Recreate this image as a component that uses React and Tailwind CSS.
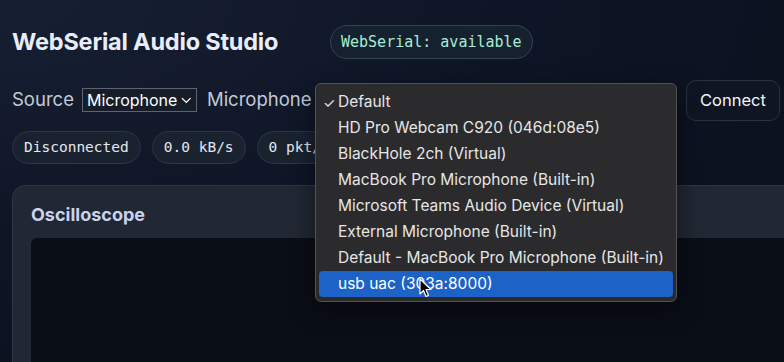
import React from 'react';

const mono = { fontFamily: '"DejaVu Sans Mono", "Liberation Mono", monospace' };

const devices = [
  'Default',
  'HD Pro Webcam C920 (046d:08e5)',
  'BlackHole 2ch (Virtual)',
  'MacBook Pro Microphone (Built-in)',
  'Microsoft Teams Audio Device (Virtual)',
  'External Microphone (Built-in)',
  'Default - MacBook Pro Microphone (Built-in)',
  'usb uac (303a:8000)',
];

const Pill = ({ children }) => (
  <span
    className="h-[33px] px-[11px] flex items-center rounded-full bg-[#1a2230] border border-[#2c3646] text-[14.5px] text-[#e2e8f0]"
    style={mono}
  >
    {children}
  </span>
);

const Cursor = () => (
  <svg className="absolute left-[419px] top-[278px]" width="14" height="20" viewBox="0 0 14 20">
    <path d="M1 1 L1 16 L4.5 12.5 L7 18.5 L9.5 17.5 L7 11.5 L12 11.5 Z" fill="#000" stroke="#fff" strokeWidth="1.2" strokeLinejoin="round" />
  </svg>
);

export default function App() {
  return (
    <div
      className="relative w-[784px] h-[362px] overflow-hidden bg-[radial-gradient(ellipse_at_0%_0%,#172033_0%,#0e1526_45%,#0a0f1a_100%)] pl-[12px] pt-[25px]"
      style={{ fontFamily: 'Inter, "Noto Sans", sans-serif' }}
    >
      {/* header */}
      <div className="flex items-center h-[34px]">
        <h1 className="w-[266px] text-[23.5px] font-bold text-[#e8edfa] tracking-[-0.2px] whitespace-nowrap">WebSerial Audio Studio</h1>
        <span
          className="ml-[52px] h-[34px] px-[10px] flex items-center rounded-full bg-[#162130] border border-[#334155] text-[15px] text-[#a7ecd2]"
          style={mono}
        >
          WebSerial: available
        </span>
      </div>

      {/* controls */}
      <div className="mt-[21px] h-[40px] flex items-center pr-[4px]">
        <span className="text-[18.5px] text-[#c3cad6]">Source</span>
        <span className="ml-[8px] h-[24px] w-[115px] px-[4px] flex items-center gap-[4px] border border-[#5b6474] bg-[#161d29] text-[16px] text-white">
          Microphone
          <svg width="11" height="7" viewBox="0 0 11 7" className="mt-[1px]">
            <path d="M1 1 L5.5 5.5 L10 1" fill="none" stroke="#fff" strokeWidth="1.4" />
          </svg>
        </span>
        <span className="ml-[10px] text-[18.5px] text-[#c3cad6]">Microphone</span>
        <button className="ml-auto h-[41px] w-[94px] rounded-[10px] bg-[#0f1622] border border-[#2a3344] text-[16.5px] text-[#f1f5f9]">
          Connect
        </button>
      </div>

      {/* status */}
      <div className="mt-[11px] flex items-center gap-[11px]">
        <Pill>Disconnected</Pill>
        <Pill>0.0 kB/s</Pill>
        <Pill>0 pkt/s</Pill>
      </div>

      {/* oscilloscope card */}
      <div className="mt-[21px] w-[900px] h-[260px] rounded-[13px] bg-[#212733] border border-[#2e3544] px-[18px] pt-[17px]">
        <h2 className="text-[18px] font-bold text-[#c9d3f0] leading-[24px]">Oscilloscope</h2>
        <div className="mt-[11px] h-[200px] rounded-[6px] bg-[#0a0e16]" />
      </div>

      {/* open device menu */}
      <div className="absolute left-[315px] top-[83px] w-[362px] rounded-[6px] bg-[#2b2b2d] border border-[#525254] px-[3px] pt-[5px] pb-[4px] shadow-[0_8px_24px_rgba(0,0,0,0.5)]">
        {devices.map((d, i) => {
          const active = i === devices.length - 1;
          return (
            <div
              key={d}
              className={`relative h-[26px] flex items-center pl-[19px] rounded-[4px] text-[15.5px] ${active ? 'bg-[#1d63c7] text-white' : 'text-[#e6e6e6]'}`}
            >
              {i === 0 && <span className="absolute left-[4px] text-[14px]">✓</span>}
              {d}
            </div>
          );
        })}
      </div>

      <Cursor />
    </div>
  );
}
